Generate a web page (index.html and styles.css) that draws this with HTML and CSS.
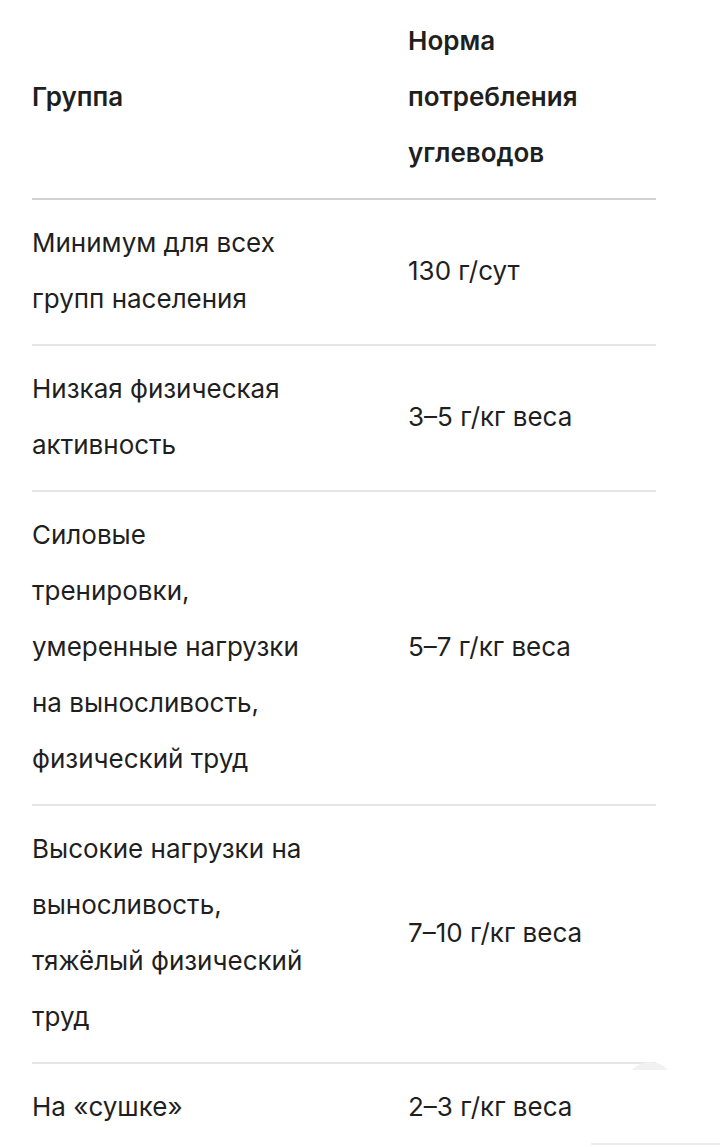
FILE: index.html
```html
<!DOCTYPE html>
<html lang="ru">
<head>
<meta charset="utf-8">
<link rel="stylesheet" href="styles.css">
</head>
<body>
<div class="page">
  <table class="norms">
    <colgroup><col class="c1"><col class="c2"></colgroup>
    <thead>
      <tr><th>Группа</th><th>Норма потребления углеводов</th></tr>
    </thead>
    <tbody>
      <tr><td>Минимум для всех групп населения</td><td>130 г/сут</td></tr>
      <tr><td>Низкая физическая активность</td><td>3–5 г/кг веса</td></tr>
      <tr><td>Силовые тренировки, умеренные нагрузки на выносливость, физический труд</td><td>5–7 г/кг веса</td></tr>
      <tr><td>Высокие нагрузки на выносливость, тяжёлый физический труд</td><td>7–10 г/кг веса</td></tr>
      <tr><td>На «сушке»</td><td>2–3 г/кг веса</td></tr>
    </tbody>
  </table>
  <div class="fab"></div>
  <div class="sheet"></div>
</div>
</body>
</html>
```
FILE: styles.css
```css
html, body { margin: 0; padding: 0; background: #fff; }
body { font-family: Inter, "Noto Sans", sans-serif; color: #1f1f1f; }
.page { position: relative; height: 1147px; overflow: hidden; padding: 0 32px; }
.norms { border-collapse: collapse; table-layout: fixed; width: 624px; font-size: 26px; line-height: 56px; }
.c1 { width: 376px; }
.c2 { width: 248px; }
th, td { text-align: left; vertical-align: middle; padding: 15px 0 17px; border-bottom: 2px solid #e6e6e6; }
th { font-weight: 600; border-bottom-color: #d2d2d2; padding: 13px 0 17px; }
th:first-child, td:first-child { padding-right: 101px; }
.fab { position: absolute; left: 626px; top: 1062px; width: 48px; height: 48px; border-radius: 50%; background: #f1f1f1; }
.sheet { position: absolute; left: 591px; top: 1070px; right: 0; bottom: 2px; background: #fff; border-bottom: 2px solid #ececec; }
```
